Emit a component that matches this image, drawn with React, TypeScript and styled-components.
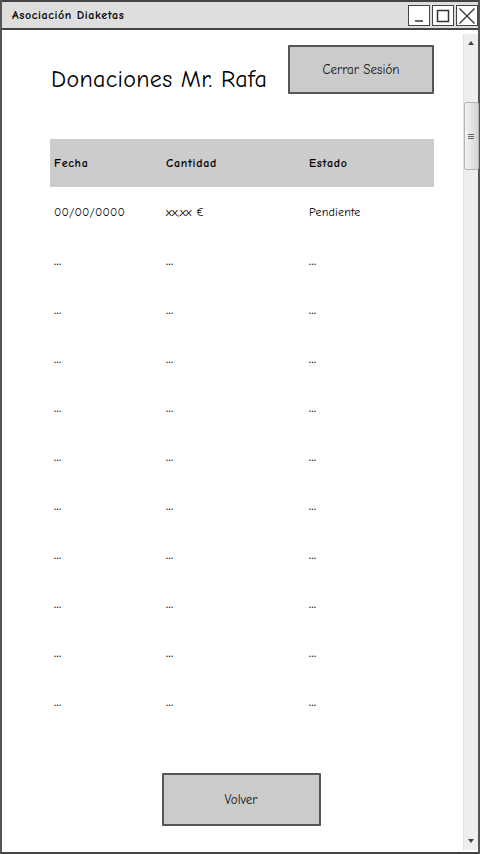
import React from "react";
import styled, { createGlobalStyle } from "styled-components";

const FONT = `"Comic Sans MS", "Comic Neue", "DejaVu Sans", sans-serif`;

const Global = createGlobalStyle`
  html, body { margin: 0; padding: 0; background: #fff; }
  body { font-family: ${FONT}; color: #000; }
  * { box-sizing: border-box; }
`;

const Window = styled.div`
  width: 480px;
  height: 854px;
  display: flex;
  flex-direction: column;
  border-left: 2px solid #555;
  border-right: 2px solid #555;
  border-bottom: 2px solid #444;
  background: #fff;
`;

const TitleBar = styled.div`
  height: 30px;
  flex: none;
  display: flex;
  align-items: center;
  justify-content: space-between;
  background: #dedede;
  border-top: 2px solid #444;
  border-bottom: 2px solid #444;
  padding-left: 10px;
`;

const TitleText = styled.span`
  font-size: 12px;
  font-weight: bold;
  letter-spacing: 0.6px;
`;

const WinButtons = styled.div`
  display: flex;
  gap: 2px;
  align-self: flex-start;
  margin-top: 3px;
`;

const WinButton = styled.div`
  width: 22px;
  height: 21px;
  border: 1.5px solid #444;
  background: #fff;
  display: flex;
  align-items: center;
  justify-content: center;
`;

const Body = styled.div`
  flex: 1;
  display: flex;
  min-height: 0;
`;

const Content = styled.div`
  flex: 1;
  padding: 15px 29px 0 48px;
  display: flex;
  flex-direction: column;
`;

const Header = styled.div`
  display: flex;
  justify-content: space-between;
  align-items: flex-start;
`;

const PageTitle = styled.h1`
  margin: 19px 0 0 1px;
  font-size: 24px;
  font-weight: normal;
  line-height: 30px;
  letter-spacing: 0.3px;
`;

const SketchButton = styled.div<{ $w: number; $h: number }>`
  width: ${(p) => p.$w}px;
  height: ${(p) => p.$h}px;
  background: #cbcbcb;
  border: 2px solid #555;
  border-radius: 1px;
  display: flex;
  align-items: center;
  justify-content: center;
  font-size: 13px;
  color: #111;
`;

const CerrarButton = styled(SketchButton)`
  align-items: flex-start;
  padding-top: 15px;
`;

const Table = styled.div`
  margin-top: 45px;
  display: flex;
  flex-direction: column;
`;

const Row = styled.div<{ $head?: boolean }>`
  display: grid;
  grid-template-columns: 112px 143px 1fr;
  align-items: center;
  height: ${(p) => (p.$head ? 48 : 49)}px;
  background: ${(p) => (p.$head ? "#cccccc" : "transparent")};
  font-size: 12px;
  font-weight: ${(p) => (p.$head ? "bold" : "normal")};
  letter-spacing: ${(p) => (p.$head ? "0.7px" : "0.2px")};
`;

const Cell = styled.div`
  padding-left: 4px;
`;

const Dots = styled.span`
  font-weight: bold;
  letter-spacing: 0.5px;
  font-size: 11px;
`;

const Footer = styled.div`
  display: flex;
  justify-content: center;
  margin-top: 47px;
  padding-right: 2px;
`;

const Scrollbar = styled.div`
  width: 15px;
  flex: none;
  margin-top: 4px;
  margin-bottom: 2px;
  background: #eeeeee;
  border-left: 1px solid #e2e2e2;
  display: flex;
  flex-direction: column;
  align-items: center;
`;

const Arrow = styled.div<{ $down?: boolean }>`
  width: 0;
  height: 0;
  border-left: 3.5px solid transparent;
  border-right: 3.5px solid transparent;
  ${(p) =>
    p.$down ? "border-top: 4px solid #444;" : "border-bottom: 4px solid #444;"}
  margin-top: ${(p) => (p.$down ? "auto" : "7px")};
  margin-bottom: ${(p) => (p.$down ? "7px" : "0")};
`;

const Thumb = styled.div`
  margin-top: 57px;
  width: 15px;
  height: 68px;
  border: 1px solid #b5b5b5;
  border-radius: 2px;
  background: linear-gradient(to right, #f2f2f2, #e2e2e2 60%, #d4d4d4);
  display: flex;
  flex-direction: column;
  align-items: center;
  justify-content: center;
  gap: 1px;
`;

const Grip = styled.div`
  width: 6px;
  height: 1px;
  background: #666;
`;

const rows = Array.from({ length: 10 });

export default function App() {
  return (
    <>
      <Global />
      <Window>
        <TitleBar>
          <TitleText>Asociación Diaketas</TitleText>
          <WinButtons>
            <WinButton>
              <svg width="16" height="16" viewBox="0 0 16 16">
                <path d="M4 13 H12" stroke="#333" strokeWidth="1.5" />
              </svg>
            </WinButton>
            <WinButton>
              <svg width="16" height="16" viewBox="0 0 16 16">
                <rect x="2.5" y="2.5" width="11" height="11" fill="none" stroke="#333" strokeWidth="1.5" />
              </svg>
            </WinButton>
            <WinButton>
              <svg width="18" height="18" viewBox="0 0 18 18">
                <path d="M1.5 1.5 L16.5 16.5 M16.5 1.5 L1.5 16.5" stroke="#333" strokeWidth="1.3" />
              </svg>
            </WinButton>
          </WinButtons>
        </TitleBar>
        <Body>
          <Content>
            <Header>
              <PageTitle>Donaciones Mr. Rafa</PageTitle>
              <CerrarButton $w={146} $h={49}>Cerrar Sesión</CerrarButton>
            </Header>
            <Table>
              <Row $head>
                <Cell>Fecha</Cell>
                <Cell>Cantidad</Cell>
                <Cell>Estado</Cell>
              </Row>
              <Row>
                <Cell>00/00/0000</Cell>
                <Cell>xx,xx €</Cell>
                <Cell>Pendiente</Cell>
              </Row>
              {rows.map((_, i) => (
                <Row key={i}>
                  <Cell><Dots>...</Dots></Cell>
                  <Cell><Dots>...</Dots></Cell>
                  <Cell><Dots>...</Dots></Cell>
                </Row>
              ))}
            </Table>
            <Footer>
              <SketchButton $w={159} $h={53}>Volver</SketchButton>
            </Footer>
          </Content>
          <Scrollbar>
            <Arrow />
            <Thumb>
              <Grip />
              <Grip />
              <Grip />
            </Thumb>
            <Arrow $down />
          </Scrollbar>
        </Body>
      </Window>
    </>
  );
}
